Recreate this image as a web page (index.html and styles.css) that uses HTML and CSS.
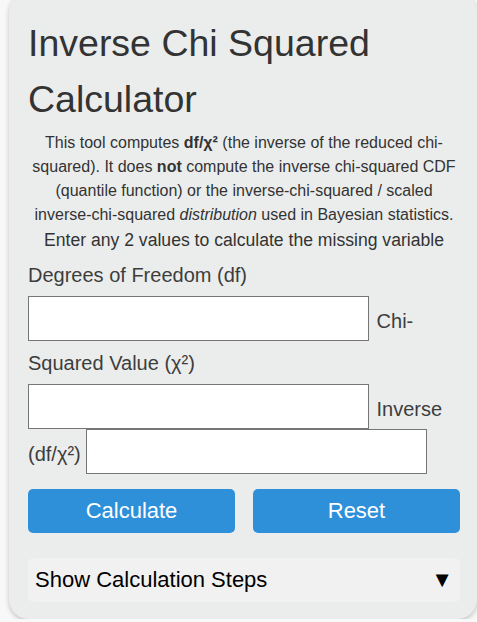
FILE: index.html
```html
<!DOCTYPE html>
<html lang="en">
<head>
<meta charset="utf-8">
<title>Inverse Chi Squared Calculator</title>
<link rel="stylesheet" href="styles.css">
</head>
<body>
<main class="calc-card">
  <h1 class="calc-title">Inverse Chi Squared Calculator</h1>
  <p class="calc-desc">This tool computes <strong>df/χ²</strong> (the inverse of the reduced chi-squared). It does <strong>not</strong> compute the inverse chi-squared CDF (quantile function) or the inverse-chi-squared / scaled inverse-chi-squared <em>distribution</em> used in Bayesian statistics.</p>
  <p class="calc-hint">Enter any 2 values to calculate the missing variable</p>

  <form class="calc-form">
    <label class="calc-label" for="df">Degrees of Freedom (df)</label>
    <input class="calc-input" type="text" id="df">
    <label class="calc-label" for="chi2">Chi-Squared Value (χ²)</label>
    <input class="calc-input" type="text" id="chi2">
    <label class="calc-label" for="inv">Inverse (df/χ²)</label>
    <input class="calc-input" type="text" id="inv">

    <div class="calc-actions">
      <button type="button" class="calc-btn">Calculate</button>
      <button type="reset" class="calc-btn">Reset</button>
    </div>
  </form>

  <details class="calc-steps">
    <summary class="calc-steps-toggle">
      <span>Show Calculation Steps</span>
      <span class="calc-steps-arrow">▼</span>
    </summary>
  </details>
</main>
</body>
</html>
```

FILE: styles.css
```css
html, body {
  margin: 0;
  padding: 0;
}

body {
  background: #f8f8f8;
  font-family: "Liberation Sans", Arial, sans-serif;
  color: #333;
  line-height: 1.5;
}

.calc-card {
  box-sizing: border-box;
  width: 468px;
  margin: -8px 0 0 9px;
  padding: 24px 17px 17px 19px;
  background: #ebeded;
  border-radius: 20px;
  box-shadow: 0 2px 5px rgba(0, 0, 0, 0.22);
}

.calc-title {
  margin: 0 0 4px;
  font-size: 37.5px;
  font-weight: normal;
  line-height: 55.5px;
  color: #333;
}

.calc-desc {
  margin: 0;
  font-size: 16px;
  line-height: 24px;
  text-align: center;
  color: #333;
}

.calc-hint {
  margin: 0;
  font-size: 17.6px;
  line-height: 1.5;
  text-align: center;
  color: #333;
}

.calc-form {
  margin: 1px 0 0;
  font-size: 20px;
  line-height: 42px;
  color: #3d3d3d;
}

.calc-input {
  box-sizing: border-box;
  width: 341px;
  height: 45px;
  margin: 0 2px 0 0;
  padding: 5px 10px 0;
  border: 1px solid #767676;
  background: #fff;
  font-family: "Liberation Sans", Arial, sans-serif;
  font-size: 20px;
  color: #333;
}

.calc-actions {
  display: grid;
  grid-template-columns: 1fr 1fr;
  column-gap: 18px;
  margin-top: 14px;
  line-height: normal;
}

.calc-btn {
  height: 44px;
  border: none;
  border-radius: 5px;
  background: #2e90d9;
  color: #fff;
  font-family: "Liberation Sans", Arial, sans-serif;
  font-size: 22px;
  cursor: pointer;
}

.calc-steps {
  margin-top: 25px;
}

.calc-steps-toggle {
  display: flex;
  justify-content: space-between;
  align-items: center;
  height: 44px;
  padding: 0 7px;
  border-radius: 6px;
  background: #f1f1f1;
  font-size: 22px;
  color: #000;
  cursor: pointer;
  list-style: none;
}

.calc-steps-toggle::-webkit-details-marker {
  display: none;
}

.calc-steps-arrow {
  font-size: 22px;
}
```
